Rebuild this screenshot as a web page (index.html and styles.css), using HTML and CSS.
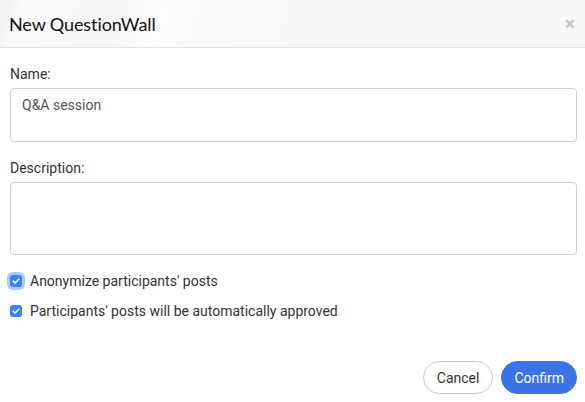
FILE: index.html
```html
<!DOCTYPE html>
<html lang="en">
<head>
    <meta charset="UTF-8">
    <meta name="viewport" content="width=device-width, initial-scale=1.0">
    <title>New QuestionWall</title>
    <link rel="stylesheet" href="styles.css">
</head>
<body>

    <div class="modal">
        <div class="modal-header">
            <h3 class="modal-title">New QuestionWall</h3>
            <span class="close">&times;</span>
        </div>

        <div class="modal-body">
            <label class="field-label" for="wall-name">Name:</label>
            <textarea id="wall-name" class="field name-field">Q&amp;A session</textarea>

            <label class="field-label" for="wall-desc">Description:</label>
            <textarea id="wall-desc" class="field desc-field"></textarea>

            <label class="check-row">
                <span class="check focused"><svg viewBox="0 0 12 12"><path d="M3.2 6.2 L5.1 8 L8.8 4.2" /></svg></span>
                Anonymize participants' posts
            </label>
            <label class="check-row">
                <span class="check"><svg viewBox="0 0 12 12"><path d="M3.2 6.2 L5.1 8 L8.8 4.2" /></svg></span>
                Participants' posts will be automatically approved
            </label>
        </div>

        <div class="modal-footer">
            <button class="btn btn-cancel">Cancel</button>
            <button class="btn btn-confirm">Confirm</button>
        </div>
    </div>

</body>
</html>
```

FILE: styles.css
```css
body { margin: 0; font-family: Roboto, "Liberation Sans", sans-serif; color: #333; background: #fff; }
.modal { width: 585px; height: 402px; overflow: hidden; }
.modal-header { height: 47px; border-bottom: 1px solid #e6e6e6; display: flex; align-items: center; justify-content: space-between; padding: 0 10px 0 9px; box-sizing: content-box;
    background: linear-gradient(110deg, #f4f4f4 0, #f4f4f4 2%, #fafafa 4%, #f7f7f7 20%, #fdfdfd 28%, #fafafa 34%, #f7f7f7 60%, #f8f8f8 100%); }
.modal-title { margin: 0; font-family: Lato, sans-serif; font-weight: 400; font-size: 18px; color: #111; letter-spacing: -0.1px; }
.close { font-size: 19px; color: #c4c4c4; font-weight: bold; line-height: 1; }
.modal-body { padding: 18px 8px 0 10px; }
.field-label { display: block; font-size: 14px; color: #333; margin: 0 0 6px; }
.field { display: block; width: 100%; box-sizing: border-box; border: 1px solid #cfcfcf; border-radius: 4px; resize: none; font-family: Roboto, "Liberation Sans", sans-serif; font-size: 14px; color: #555; padding: 8px 11px; outline: none; }
.name-field { height: 54px; margin-bottom: 18px; }
.desc-field { height: 73px; margin-bottom: 16px; }
.check-row { display: flex; align-items: center; gap: 8px; font-size: 14px; color: #333; height: 20px; margin-bottom: 10px; }
.check { width: 12px; height: 12px; border-radius: 3px; background: #3a82f6; display: inline-flex; }
.check.focused { box-shadow: 0 0 0 3px #a9c9fb; }
.check svg { width: 12px; height: 12px; fill: none; stroke: #fff; stroke-width: 1.6; stroke-linecap: round; stroke-linejoin: round; }
.modal-footer { display: flex; justify-content: flex-end; gap: 8px; padding: 30px 8px 0 0; }
.btn { height: 33px; border-radius: 17px; font-family: Roboto, "Liberation Sans", sans-serif; font-size: 14px; cursor: pointer; }
.btn-cancel { background: #fff; border: 1px solid #ccc; color: #333; padding: 0 13px; }
.btn-confirm { background: #3b73e6; border: 1px solid #3b73e6; color: #fff; padding: 0 12px; }
```
